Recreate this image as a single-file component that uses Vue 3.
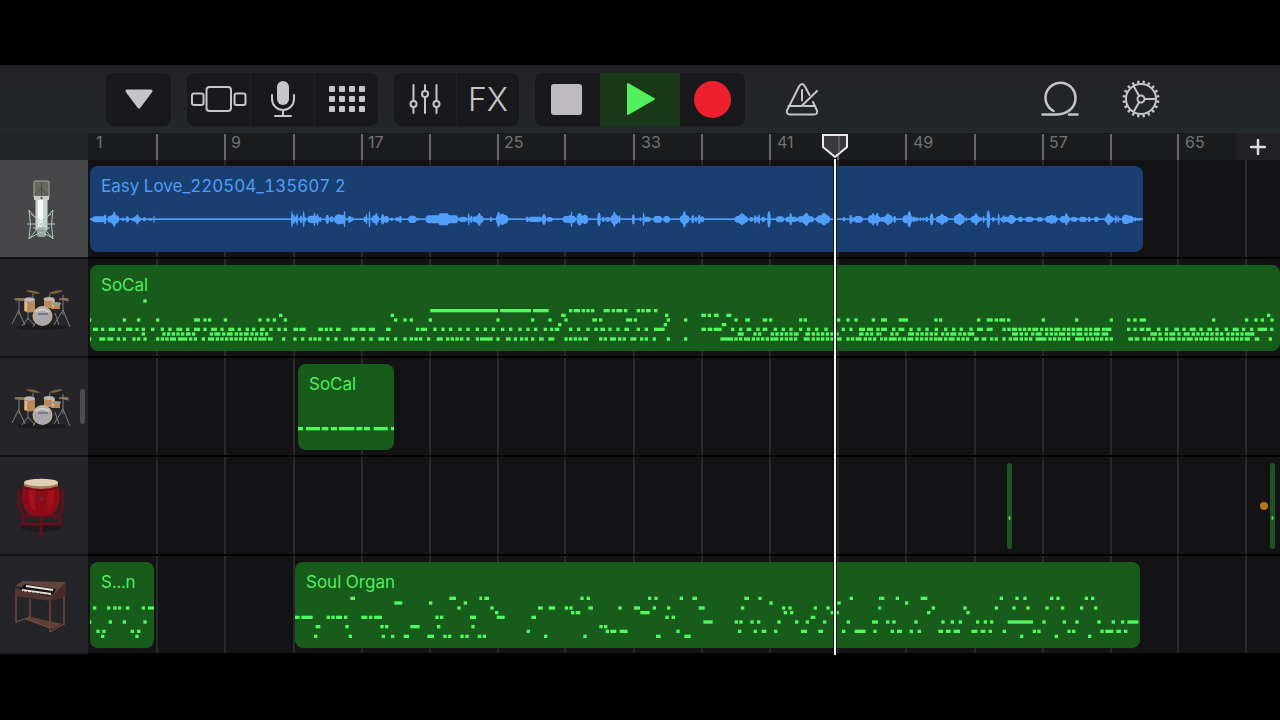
<script setup>
const tickPositions = [68, 136, 205, 273, 341, 409, 476, 545, 613, 681, 749, 817, 886, 954, 1022, 1089, 1157]
const barLabels = [
  { bar: 1, x: 8 }, { bar: 9, x: 143 }, { bar: 17, x: 280 }, { bar: 25, x: 416 }, { bar: 33, x: 553 },
  { bar: 41, x: 689 }, { bar: 49, x: 825 }, { bar: 57, x: 961 }, { bar: 65, x: 1097 },
]
const rulerTicks = tickPositions.slice(0, 16)

// Notes are written as "x", "x:width" or "from..to" (a run of short notes), three units to a pixel.
function notes(lanes) {
  const out = []
  for (const [y, ...parts] of lanes) {
    parts.forEach((part, i) => {
      const offset = [0, 1185, 2385][i]
      for (const item of part.split(' ').filter(Boolean)) {
        if (item.includes('..')) {
          const [from, to] = item.split('..').map(Number)
          for (let x = from; x <= to; x += 14) out.push({ x: x + offset, y, w: 10 })
        } else {
          const [x, w = 10] = item.split(':').map(Number)
          out.push({ x: x + offset, y, w })
        }
      }
    })
  }
  return out
}

const drumNotes = notes([
  [423, '175'],
  [452, '1036:149', '0:54 60:93 159:47 267 281:19 305 319 333 371:18 395 409:18 432 470 484 498:14 522'],
  [466, '582 917', '243:14 555 664:14 683 702:14 739:15', '1161'],
  [480, '15:4 113 156 213 327:18 355 369 416 520 544 563 596 927 955 974 1031',
    '49 153 205 253 337:14 357 438:18 461 560 612 763 796:14 848:14 867 957 971 1071 1099 1123 1175',
    '3:18 56:28 163 177 291 320:18 344 358:18 381 485 585 689 741 760 779:19 996 1095 1123 1142 1171'],
  [494, '', '234 551 725:14'],
  [508, '24:15 48 71:19 99 123:19 151 170 198 227 250 274:18 303 327:18 355 378:18 406 430:18 458 482 501 525:14 553 577 596 625:14 643:19 700:14 719 733 753:14 800:18 823:19 851:19 903:14 993 1007:19 1045 1069 1092 1120 1144 1172',
    '11 35 63 87 115 139 162 191 210 224:14 267 291 319 343 361:14 385 409 433:14 470 494 522:32 664:14 683:14 701:24 753 777 800:14 829 848:14 881 905 928 957 981 1005 1033 1085 1108 1137:18 1161:18 1189',
    '3:18 36 55:18 88 112 136 164 192 216 239 268 291:18 320:18 367 382 396:15 415 429 443 457:18 480 495 509 523:18 547 561 575 589:18 613 627 642:18 666 676:18 741 760 779:14 798:14 831 855 883:14 907 929:18 958 982:14 1006 1034 1058:18 1086 1110 1133:28 1170'],
  [522, '170 232 246 260 274 288 303:14 321 374 388:18 411 425:18 449 463 477:14 496 510 525 540',
    '773:18 820 834 872..914 928 942:14 976:14 995 1009 1023 1037 1051 1066 1137:14 1156 1170 1189',
    '0:4 31 46 84:18 107 121 135 149 163 183 197 211:18 235 249 263 273 396:18 419 434 453 467:18 495 509 523 537:18 561 575 589:18 613 627 641:18 665 675 811:20 835 854 868:18 892 911:18 935..991 1006 1020 1039 1053 1067 1081 1095:28'],
  [537, '15:4 43:18 67:18 95 113 142 156 175 213 227 241 255:18 279:28 312 326 350 369:18 392..462 477 491 506 520 530:14 549:14 591 625 648 671 685 699 724 748 776:14 795:14 829 853 880:18 903 927 955 974 988 1002 1026 1055:18 1083 1097 1111 1125 1144 1172',
    '0:38 49 78:14 101 120 134 153 177:14 205:18 253 267 281 295 310:14 357 371 390:18 414 428 451:18 480 494 518 560 612 721:38 763 777 792:18 815..871 881:14 900..942 971:18 995..1051 1071:14 1099 1113 1127:18 1151 1165 1179',
    '0:8 12 26 36:14 54 68 82:18 106..162 173:14 192 206:18 230 244 258 282:14 305:14 330 344 367 386 400:14 419 433 447 467:32 505 519 533 547 561 585:28 618..660 675 689 745:14 764:14 788 802 816 835:14 854 868:18 892 906 920:18 944 958 972:14 991 1005 1019:14 1038..1094 1100 1124:14 1166'],
])

const organIntro = notes([
  [159, '24 66 85 99 123 170 189:20'],
  [201, '15:4 71 113 175'],
  [229, '34 52 137 156'],
  [244, '48 151'],
])

const organNotes = notes([
  [130, '795:14 1092:20 1182:8', '0:5 12:14 300 319 503 522 598 636:14 792:14 834 1108 1196:4', '0:12 46 121:20 358 405 429 509 528 613 632'],
  [144, '927:24 1031 1135', '867 1071', '74'],
  [159, '1116', '30 173:14 205:19 253 267 324:14 414 461:18 517 560 655:18 782 905 924 1000 1038 1194:6', '0:3 154 249 343 396 438 495 542 599 641'],
  [173, '', '44 272 286:14 480:28 910 929 1051 1066', '140 258'],
  [187, '629:14 648:34 724 738 752:18 776 828:18 851 866:24 1050 1064 1154:18', '49:24 153:14 555 574 991:14'],
  [201, '', '669:28 763 777 810 830 891 944 976 1028 1099 1175:18', '17 36 102 183 211 235 287 310 329 382:76 486 547 585 651 694 722 741:33'],
  [215, '691:14 780 885 899 975:28 1055 1158', '357 371'],
  [229, '', '139 376 390:18 418:24 588 773 820 844:14 881 962:18 1014:14 1085 1123:33 1179', '31 50:15 88 112 174:14 197:14 220:19 273:18 301:14 325 367 457 471 561 575 660 675:24 708:14 731'],
  [244, '686 790 889 917 955:16 1026:20 1074 1088 1125 1140 1177', '0:3 7 191 309 527:14 612:19', '419 523 623'],
])

const fillNotes = notes([[236, '54:15 78:42 125:20 153:18 177:46 229:18 252:18 281:42 333:9']])
const hitNotes = notes([[189, '5:5']])

// Peaks are "x:width:half height" in the same units.
const peakData = [
  '18:6:4 22:38:9 56:8:14 68:8:9 72:30:12 78:18:17 84:8:23 110:8:5 122:10:9 138:8:4 145:22:9 153:8:15 174:8:6 190:12:4 205:4:11 618:6:24 624:6:15 630:10:10 634:5:17 644:8:10 653:6:24 659:4:8 668:36:11 686:5:20 695:5:17 703:6:8 722:10:13 734:12:9 748:34:13 752:20:15 776:5:24 788:12:10 798:8:6 836:8:8 842:5:15 851:5:24 860:22:12 870:8:18 888:10:15 896:16:10 916:8:5 930:20:6 942:8:10 970:24:11 994:8:4 1022:98:12 1058:36:18 1072:22:15 1122:24:8 1148:6:18 1155:8:10 1164:10:9 1172:20:14 1178:10:19',
  '0:10:10 30:6:8 48:36:13 50:12:22 60:14:17 138:8:8 146:40:8 186:12:16 200:18:7 248:40:10 262:20:12 272:5:23 290:18:18 306:18:14 352:10:20 366:8:8 376:14:7 392:24:14 398:10:22 416:5:12 456:8:15 478:6:6 488:6:20 492:20:8 520:26:10 550:20:10 600:28:12 608:10:24 634:8:12 644:8:8 654:8:14 662:10:9 764:40:10 774:24:15 780:12:18 808:12:7 822:8:12 830:6:8 834:6:15 844:12:8 862:10:24 888:24:9 916:36:8 928:8:18 952:50:9 966:24:14 972:14:19 1006:8:6 1010:40:12 1022:20:18 1088:8:6 1108:8:13 1116:6:7 1122:26:10 1164:36:12 1174:10:18 1188:8:19',
  '0:14:7 12:26:13 18:12:18 40:8:10 68:30:12 82:12:24 98:8:8 106:8:6 118:6:6 128:5:6 136:8:8 150:10:18 168:36:10 178:16:16 222:32:13 230:18:18 256:6:6 272:28:10 282:12:18 300:6:6 308:6:10 320:10:26 336:8:7 353:6:17 362:46:8 368:6:12 384:20:13 414:14:8 436:24:8 470:18:7 496:36:10 508:14:13 522:6:13 540:30:10 554:10:18 572:20:7 598:22:8 624:8:8 642:14:8 674:26:10 680:12:18 704:6:12 712:6:10 726:24:14 746:14:11 760:10:6 770:14:4',
]
const wavePath = peakData.map((part, i) =>
  part.split(' ').map((item) => {
    const [x, w, h] = item.split(':').map(Number)
    const taper = Math.min(6, Math.floor(w / 3))
    const left = x + [0, 1185, 2385][i]
    const s = Math.round(h / 2)
    return `M${left} ${178 - s}l${taper} ${s - h}h${w - 2 * taper}l${taper} ${h - s}v${2 * s}l${-taper} ${h - s}h${2 * taper - w}l${-taper} ${s - h}z`
  }).join(''),
).join('')

const tracks = [
  { name: 'Microphone', icon: 'mic', selected: true, regions: [
    { label: 'Easy Love_220504_135607 2', x: 2, w: 1053, kind: 'audio', notes: [], box: '15 18' },
  ] },
  { name: 'Drum kit 1', icon: 'drums', regions: [
    { label: 'SoCal', x: 2, w: 1190, kind: 'midi', notes: drumNotes, box: '15 315' },
  ] },
  { name: 'Drum kit 2', icon: 'drums', regions: [
    { label: 'SoCal', x: 210, w: 96, kind: 'midi', notes: fillNotes, box: '54 42' },
  ] },
  { name: 'Taiko drum', icon: 'taiko', marker: 1172, regions: [
    { label: '', x: 919, w: 5, kind: 'hit', notes: hitNotes, box: '0 24' },
    { label: '', x: 1182, w: 5, kind: 'hit', notes: hitNotes, box: '0 24' },
  ] },
  { name: 'Organ', icon: 'organ', regions: [
    { label: 'S...n', x: 2, w: 64, kind: 'midi', notes: organIntro, box: '15 21' },
    { label: 'Soul Organ', x: 207, w: 845, kind: 'midi', notes: organNotes, box: '629 21' },
  ] },
]

const gearTeeth = Array.from({ length: 20 }, (_, i) => i * 18 + 9)
const padDots = Array.from({ length: 12 }, (_, i) => ({ x: (i % 4) * 10 + 1, y: Math.floor(i / 4) * 10 + 1 }))
</script>

<template>
  <main class="screen">
    <div class="studio">
      <header class="toolbar">
        <div class="group">
          <button class="tool" aria-label="Menu">
            <svg width="30" height="22" viewBox="0 0 30 22"><path d="M3 3h24L15 19z" fill="#c6c5c9" stroke="#c6c5c9" stroke-width="3" stroke-linejoin="round" /></svg>
          </button>
        </div>
        <div class="group">
          <button class="tool mid" aria-label="Instruments">
            <svg width="56" height="26" viewBox="0 0 56 26" fill="none" stroke="#c6c5c9" stroke-width="2">
              <rect x="15.500" y="1" width="24.500" height="24" rx="3" /><rect x="1" y="7.500" width="11.500" height="11.500" rx="2" /><rect x="43.500" y="7.500" width="11" height="11.500" rx="2" />
            </svg>
          </button>
          <button class="tool mid" aria-label="Audio recorder">
            <svg width="26" height="38" viewBox="0 0 26 38" fill="none" stroke="#c6c5c9" stroke-width="2" stroke-linecap="round">
              <rect x="7" y="1" width="12" height="24" rx="6" fill="#c6c5c9" stroke="none" /><path d="M2 15v4a11 11 0 0 0 22 0v-4M13 30v5M5 36h16" />
            </svg>
          </button>
          <button class="tool mid" aria-label="Live loops">
            <svg width="38" height="28" viewBox="0 0 38 28" fill="#c6c5c9"><rect v-for="(d, i) in padDots" :key="i" :x="d.x" :y="d.y" width="6" height="6" rx="1" /></svg>
          </button>
        </div>
        <div class="group">
          <button class="tool small" aria-label="Track controls">
            <svg width="32" height="30" viewBox="0 0 32 30" fill="none" stroke="#c6c5c9" stroke-width="2" stroke-linecap="round">
              <path d="M4.500 1v15.500M4.500 23v6M16 1v6M16 13.500V29M27.500 1v15.500M27.500 23v6" /><circle cx="4.500" cy="20" r="3" /><circle cx="16" cy="10" r="3" /><circle cx="27.500" cy="20" r="3" />
            </svg>
          </button>
          <button class="tool small fx">FX</button>
        </div>
        <div class="group transport">
          <button class="tool" aria-label="Stop"><span class="stop"></span></button>
          <button class="tool play" aria-label="Play">
            <svg width="30" height="34" viewBox="0 0 30 34"><path d="M2 2v30l26-15z" fill="#50f05f" stroke="#50f05f" stroke-width="2" stroke-linejoin="round" /></svg>
          </button>
          <button class="tool" aria-label="Record"><span class="record"></span></button>
        </div>
        <button class="plain metronome" aria-label="Metronome">
          <svg width="34" height="34" viewBox="0 0 34 34" fill="none" stroke="#c6c5c9" stroke-width="2" stroke-linecap="round" stroke-linejoin="round">
            <path d="M24.500 13L20 4.500Q17 -.5 14 4.500L2 28.500Q1 32.500 5 32.500H29Q33 32.500 32 28.500L28 20M3.500 24H17M19 24H30M17 8V18.500M17 23.500L32 9" />
          </svg>
        </button>
        <button class="plain right" aria-label="Loop browser">
          <svg width="38" height="36" viewBox="0 0 38 36" fill="none" stroke="#c6c5c9" stroke-width="2.500" stroke-linecap="round">
            <path d="M1.500 33.500H15C26 33.500 34.500 27 34.500 17A15 15 0 1 0 12.500 30M28 33.500H36.500" />
          </svg>
        </button>
        <button class="plain" aria-label="Settings">
          <svg width="38" height="38" viewBox="-19 -19 38 38" fill="none" stroke="#c6c5c9" stroke-width="2">
            <circle r="15" /><circle r="3.500" /><path d="M3.500 0H15M-1.800 -3L-7.500 -13M-1.800 3L-7.500 13" />
            <path v-for="a in gearTeeth" :key="a" d="M0 -15.500V-18.500" stroke-width="2.300" :transform="`rotate(${a})`" />
          </svg>
        </button>
      </header>

      <section class="stage">
        <div class="ruler-row">
          <div class="ruler">
            <span v-for="x in rulerTicks" :key="x" class="tick" :style="{ left: x + 'px' }"></span>
            <span v-for="l in barLabels" :key="l.bar" class="bar" :style="{ left: l.x + 'px' }">{{ l.bar }}</span>
          </div>
          <button class="add" aria-label="Add section">
            <svg width="16" height="16" viewBox="0 0 16 16"><path d="M8 1v14M1 8h14" stroke="#dcdbdf" stroke-width="2.500" stroke-linecap="round" /></svg>
          </button>
        </div>

        <div v-for="(track, t) in tracks" :key="t" class="track">
          <button class="head" :class="{ selected: track.selected }" :aria-label="track.name">
            <svg v-if="track.icon === 'mic'" width="30" height="62" viewBox="0 0 30 62">
              <path d="M8 2q0-1 1-1h13q1 0 1 1v15h-15z" fill="#68675f" stroke="#aaa9a1" stroke-width="1" />
              <path d="M15.500 2v14M9 15L15 8l6 7" stroke="#4b4b47" fill="none" /><rect x="8" y="16" width="15" height="4" fill="#c9ccc8" /><circle cx="15.500" cy="18" r="1" fill="#333" />
              <rect x="9.500" y="20" width="12" height="30" fill="#c9d6cd" /><rect x="12" y="20" width="5" height="28" fill="#f4fff9" /><rect x="11" y="47" width="9" height="10" rx="2" fill="#92a49c" />
              <path d="M3 30l24 29M27 30L3 59M3 30q3 14 0 29M27 30q-3 14 0 29M1 44h28M5 34l10 7 10-7M4 58l11-6 12 6M7 48h17" fill="none" stroke="#b5c9c1" stroke-width="1" />
            </svg>
            <svg v-else-if="track.icon === 'drums'" width="60" height="44" viewBox="0 0 60 44">
              <ellipse cx="31" cy="39" rx="25" ry="3" fill="#1b1b1e" />
              <path d="M8 13v14M8 22L1 36M8 24l6 13M17 14v18M17 30l-6 8M17 30l7 8M22 6v12M39 6l-3 15M52 7v20M52 22l-9 15M52 22l7 17M31 24l-9 15M44 25l4 12M4 12l18 1M48 11l10 2" fill="none" stroke="#7d7c7b" stroke-width="1" />
              <ellipse cx="22" cy="4" rx="7" ry="1.200" transform="rotate(12 22 4)" fill="#7d663f" /><ellipse cx="45" cy="4" rx="7" ry="1.200" transform="rotate(-12 45 4)" fill="#7d663f" />
              <ellipse cx="9" cy="11" rx="6" ry="1" fill="#8f7849" /><ellipse cx="53" cy="11" rx="5" ry="1" fill="#8f7849" />
              <path d="M13 12h11v11q-5 3-11 0zM33 11h11v9H33zM40 16h9v5h-9z" fill="#b88a5a" /><path d="M15 14v9M42 12v7" stroke="#e0bd90" stroke-width="2" />
              <ellipse cx="18.500" cy="11.500" rx="5.500" ry="2.200" fill="#b9b6b4" /><ellipse cx="38" cy="11" rx="5.500" ry="2" fill="#b9b6b4" /><ellipse cx="45" cy="15.500" rx="5" ry="1.500" fill="#9a9999" />
              <circle cx="31.500" cy="28" r="10" fill="#cdb38c" /><circle cx="31.500" cy="28.500" r="8.800" fill="#a9a8ae" /><path d="M27 26h10" stroke="#4b4b52" stroke-width="1" />
              <path d="M25 24q6-5 13 0" stroke="#d0cfd5" fill="none" stroke-width="2" />
            </svg>
            <svg v-else-if="track.icon === 'taiko'" width="52" height="60" viewBox="0 0 52 60">
              <ellipse cx="26" cy="49" rx="20" ry="5" fill="#1b1b1d" />
              <path d="M3 11q3 7 1 14 0 7 4 11l-1 12M49 11q-3 7-1 14 0 7-4 11l1 12M6 46h40M6 38h40M26 38v21" fill="none" stroke="#63101a" stroke-width="3" />
              <path d="M9 5h34q5 22-5 31-12 4-24 0Q3 26 9 5z" fill="#8b0c17" /><path d="M14 10h7q-3 12 0 24-9-6-7-24z" fill="#a8121e" /><path d="M33 10h6q2 15-5 24-4-8-1-24z" fill="#a00f1b" />
              <path d="M9 4v4q17 6 34 0V4z" fill="#9b8160" /><ellipse cx="26" cy="4.500" rx="17" ry="3.800" fill="#dfd0b3" /><path d="M10 10q16 5 32 0" stroke="#571014" fill="none" stroke-width="1" /><circle cx="26" cy="21" r="2" fill="#6c2730" />
            </svg>
            <svg v-else width="54" height="56" viewBox="0 0 54 56">
              <path d="M1 7L9 2l43 1-11 13z" fill="#60433b" /><path d="M41 14L52 3v15L38 22z" fill="#452b27" /><path d="M11 5l31 5-3 6L4 11z" fill="#161415" />
              <path d="M1 9v8l36 5 4-8-3 1-3 3z" fill="#52362f" /><path d="M12 7l27 4M8 11l29 4" stroke="#e7dfd7" stroke-width="2" /><path d="M9 12l27 4" stroke="#242021" stroke-dasharray="1 3" />
              <path d="M2 17v27M36 22v31M16 20v19M50 18v28" stroke="#5c4037" stroke-width="2" fill="none" /><path d="M12 40l5-2 31 7-9 5z" fill="#613e36" /><path d="M2 43l14-5M36 53l14-8M12 40l24 9" stroke="#75554a" stroke-width="1" />
            </svg>
          </button>
          <div class="lane">
            <span v-for="x in tickPositions" :key="x" class="line" :style="{ left: x + 'px' }"></span>
            <div v-for="(r, i) in track.regions" :key="i" class="region" :class="r.kind" :style="{ left: r.x + 'px', width: r.w + 'px' }">
              <svg class="content" :viewBox="`${r.box} ${r.w * 3} 258`" :width="r.w" height="86">
                <template v-if="r.kind === 'audio'">
                  <rect x="15" y="175" width="3159" height="5" />
                  <path :d="wavePath" />
                </template>
                <rect v-for="(n, k) in r.notes" :key="k" :x="n.x" :y="n.y - 5" :width="n.w" height="10" />
              </svg>
              <span v-if="r.label" class="label">{{ r.label }}</span>
            </div>
            <span v-if="track.marker" class="dot" :style="{ left: track.marker + 'px' }"></span>
          </div>
          <span v-if="t === 2" class="thumb"></span>
        </div>

        <div class="playhead">
          <svg width="28" height="26" viewBox="0 0 28 26"><path d="M2 2h24v12L14 24 2 14z" fill="#3a3a3c" stroke="#ececee" stroke-width="2" /><path d="M18 3v17" stroke="#777779" stroke-width="1" /></svg>
          <span class="needle"></span>
        </div>
      </section>
    </div>
  </main>
</template>

<style>
body { margin: 0; background: #000; }
</style>

<style scoped>
.screen { min-height: 100vh; box-sizing: border-box; background: #000; display: flex; flex-direction: column; justify-content: center; font-family: Inter, "Liberation Sans", sans-serif; overflow: hidden; }
.studio { background: #141416; }
button { border: 0; padding: 0; margin: 0; background: none; color: inherit; font: inherit; display: flex; align-items: center; justify-content: center; }
svg { display: block; flex: none; }
.toolbar { height: 68px; box-sizing: border-box; padding: 0 107px 0 106px; display: flex; align-items: center; gap: 16px; background: linear-gradient(#232326, #232527 60%, #232829); }
.group { display: flex; gap: 1px; height: 53px; border-radius: 8px; overflow: hidden; background: #212123; }
.tool { width: 65px; background: #19191b; }
.tool.mid { width: 63px; }
.tool.small { width: 62px; }
.transport { gap: 0; }
.tool.play { width: 80px; padding-left: 2px; background: #193818; }
.fx { font-size: 32px; font-weight: 300; color: #c6c5c9; }
.stop { width: 31px; height: 31px; margin-right: 3px; border-radius: 3px; background: #bdbbc0; }
.record { width: 37px; height: 37px; border-radius: 50%; background: #ef202d; }
.plain { width: 65px; height: 53px; }
.metronome { margin-left: 8px; }
.right { margin-left: auto; }
.stage { position: relative; }
.ruler-row { display: flex; height: 27px; padding-left: 88px; background: #232527; }
.ruler { position: relative; flex: 1; min-width: 0; overflow-x: clip; background: #1b1c1e; }
.tick { position: absolute; top: 1px; bottom: 0; width: 2px; background: #68686b; }
.bar { position: absolute; top: -1px; font-size: 16px; line-height: 20px; color: #727275; }
.add { width: 44px; background: #212123; }
.track { position: relative; display: flex; height: 99px; }
.head { width: 88px; flex: none; padding: 4px 7px 0 0; background: #252529; border-bottom: 2px solid #131315; }
.head.selected { background: #47474a; }
.lane { position: relative; flex: 1; min-width: 0; overflow: hidden; background: #131315; border-bottom: 2px solid #020202; }
.track:last-child .lane { border-bottom: 0; }
.line { position: absolute; top: 0; bottom: 0; width: 2px; background: #29292b; }
.region { position: absolute; top: 6px; height: 86px; border-radius: 8px; overflow: hidden; background: #175c1b; color: #50ee5b; fill: #50f95d; }
.region.audio { background: #193f71; color: #509cf5; fill: #509dfc; }
.region.hit { background: #1d5320; border-radius: 3px; }
.content { position: absolute; inset: 0; }
.label { position: absolute; top: 9px; left: 11px; font-size: 17px; line-height: 22px; white-space: nowrap; font-variant-numeric: tabular-nums; }
.dot { position: absolute; top: 45px; width: 8px; height: 8px; border-radius: 50%; background: #b87620; }
.thumb { position: absolute; left: 80px; top: 31px; width: 5px; height: 35px; border-radius: 3px; background: #4c4c50; }
.playhead { position: absolute; left: 821px; top: 0; bottom: 0; width: 28px; display: flex; flex-direction: column; align-items: center; }
.needle { flex: 1; width: 2px; background: #f4f4f5; box-shadow: 0 0 0 1px rgba(10, 10, 12, 0.7); }
</style>
